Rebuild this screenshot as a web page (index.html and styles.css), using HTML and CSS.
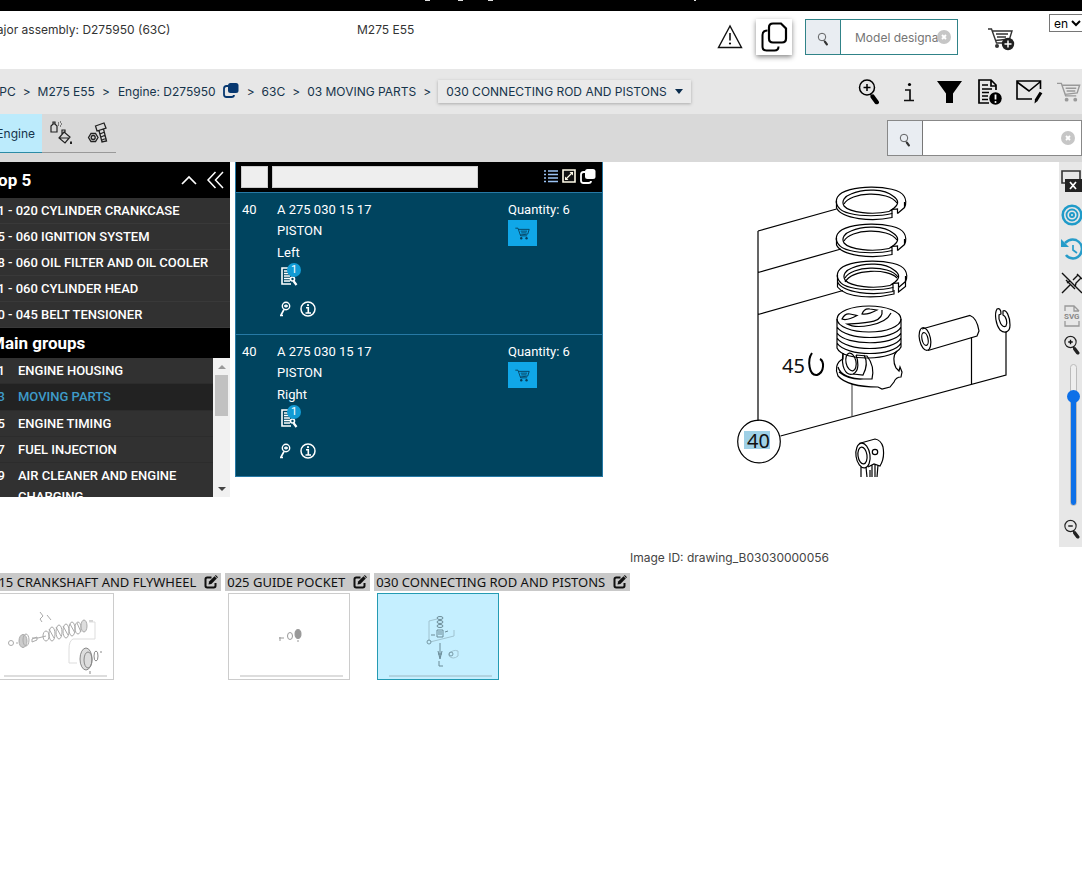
FILE: index.html
```html
<!DOCTYPE html>
<html lang="en">
<head>
<meta charset="utf-8">
<title>Parts catalogue</title>
<link rel="stylesheet" href="styles.css">
</head>
<body>
<svg class="defs" width="0" height="0" aria-hidden="true">
  <symbol id="zoomer" viewBox="0 0 24 26"><circle cx="10" cy="9" r="7.5" fill="none" stroke="currentColor" stroke-width="1.5"/><path d="M13.5 15.5l1.7 3" stroke="currentColor" stroke-width="1.5"/><path d="M15.7 18.2l4 5.5" stroke="currentColor" stroke-width="4.5" stroke-linecap="round"/></symbol>
  <symbol id="cart" viewBox="0 0 26 22"><path d="M0 2h4.500l4.500 13h11M5.500 4h18l-2.500 8-12.500 1.500M9 7h11M10 10h9" fill="none" stroke="currentColor" stroke-width="1.500"/><circle cx="10" cy="19" r="2" fill="currentColor"/><circle cx="19" cy="19" r="2" fill="currentColor"/></symbol>
  <symbol id="copy" viewBox="0 0 16 16"><path d="M5 4H3.500Q1 4 1 6.500v6Q1 15 3.500 15h5Q11 15 11 13" fill="none" stroke="currentColor" stroke-width="1.800"/><rect x="5" y="1" width="10.500" height="10" rx="2.500" fill="currentColor"/></symbol>
  <symbol id="edit" viewBox="0 0 14 14"><path d="M7.500 2.500H3.200Q1.500 2.500 1.500 4.200v6.600q0 1.700 1.700 1.700h6.600q1.700 0 1.700-1.700V8" fill="none" stroke="currentColor" stroke-width="2"/><path d="M4.500 9.500l.6-2.900L10.500 1.300l2.300 2.300-5.400 5.300z" fill="currentColor"/><path d="M11 .8l.8-.8L14 2.200l-.8.800z" fill="currentColor"/></symbol>
  <symbol id="doc" viewBox="0 0 17 19"><path d="M14 9V1H1v16h9" fill="none" stroke="currentColor" stroke-width="1.600"/><path d="M3 4h5M3 6.500h6M3 9h6M3 11.500h6M3 14h6" stroke="currentColor" stroke-width="1.500"/><circle cx="11.500" cy="12" r="2" fill="none" stroke="currentColor" stroke-width="1.600"/><path d="M12.500 14l3 4" stroke="currentColor" stroke-width="2.200"/></symbol>
  <symbol id="key" viewBox="0 0 14 16"><circle cx="8" cy="5" r="3.700" fill="none" stroke="currentColor" stroke-width="1.400"/><path d="M6 5h4M8 3.500v3M6 8.500L3 14M2 14.500h3" stroke="currentColor" stroke-width="1.600"/></symbol>
  <symbol id="info" viewBox="0 0 16 16"><circle cx="8" cy="8" r="7" fill="none" stroke="currentColor" stroke-width="1.500"/><path d="M6 6.700h2.300V12M5.500 12h5.500" fill="none" stroke="currentColor" stroke-width="1.600"/><circle cx="8" cy="4.200" r="1.100" fill="currentColor"/></symbol>
  <symbol id="clear" viewBox="0 0 14 14"><circle cx="7" cy="7" r="7" fill="#c6c6c6"/><path d="M5 5l4 4M9 5l-4 4" stroke="#fff" stroke-width="1.800"/></symbol>
</svg>

<div class="page">
  <div class="topbar">
    <svg class="topbar-marks" width="280" height="1" aria-hidden="true"><path d="M1 0h5M34 0h5M64 0h5M270 0h2" stroke="#ddd" stroke-width="2"/></svg>
  </div>

  <header class="header">
    <div class="assembly">Major assembly: D275950 (63C)</div>
    <div class="model">M275 E55</div>
    <div class="header-tools">
      <button class="plain" aria-label="Warnings"><svg width="26" height="26" viewBox="0 0 26 26"><path d="M13 2L1.500 23.500h23z" fill="none" stroke="#111" stroke-width="1.400"/><path d="M13 9v7.500" stroke="#111" stroke-width="1.600"/><circle cx="13" cy="19.500" r="1.100"/></svg></button>
      <button class="copy-button" aria-label="Copy"><svg width="28" height="30" viewBox="0 0 28 30"><path d="M7.500 8.500Q2.500 8.500 2.500 13v11.500Q2.500 28.500 6.500 28.500H14.500Q18.500 28.500 18.500 24.500" fill="none" stroke="#000" stroke-width="2"/><path d="M13 1.500h8l5 5v10Q26 20.500 22 20.500h-9Q9 20.500 9 16.500v-11Q9 1.500 13 1.500z" fill="none" stroke="#000" stroke-width="2.200"/></svg></button>
      <form class="search search-model">
        <button type="button" class="search-go" aria-label="Search model"><svg width="12" height="14"><use href="#zoomer"/></svg></button>
        <input type="text" aria-label="Model designation" placeholder="Model designation">
        <button type="button" class="clear" aria-label="Clear model"><svg width="14" height="14"><use href="#clear"/></svg></button>
      </form>
      <button class="plain cart-add" aria-label="Add to cart"><svg width="28" height="24" viewBox="0 0 28 24"><path d="M1 2h3.500l5 14h9M5 4h20l-2.500 8-14 1.500M9 7h12M10 10h9" fill="none" stroke="#333" stroke-width="1.400"/><circle cx="10" cy="19" r="2" fill="#333"/><circle cx="21" cy="17" r="6.200" fill="#222"/><path d="M21 13.500v7M17.500 17h7" stroke="#fff" stroke-width="1.500"/></svg></button>
      <select class="language" aria-label="Language"><option>en</option></select>
    </div>
  </header>

  <div class="crumb-bar">
    <nav class="crumbs" aria-label="Breadcrumb">
      <a href="#">EPC</a><span>&gt;</span>
      <a href="#">M275 E55</a><span>&gt;</span>
      <a href="#" class="crumb-engine">Engine: D275950 <svg width="16" height="16"><use href="#copy"/></svg></a><span>&gt;</span>
      <a href="#">63C</a><span>&gt;</span>
      <a href="#">03 MOVING PARTS</a><span>&gt;</span>
      <button class="crumb-menu">030 CONNECTING ROD AND PISTONS <svg width="8" height="5" viewBox="0 0 8 5"><path d="M0 0h8L4 5z" fill="#0b2d4e"/></svg></button>
    </nav>
    <div class="crumb-tools">
      <button aria-label="Zoom search"><svg width="24" height="27" viewBox="0 0 24 26"><use href="#zoomer"/><path d="M10 5.500v7M6.500 9h7" stroke="#000" stroke-width="1.500"/></svg></button>
      <button aria-label="Information"><svg width="14" height="22" viewBox="0 0 14 22"><path d="M3 9h5v10M2 19.500h10" fill="none" stroke="#111" stroke-width="1.700"/><circle cx="7.500" cy="3.500" r="1.600"/></svg></button>
      <button aria-label="Filter"><svg width="25" height="22" viewBox="0 0 25 22"><path d="M0 0h25l-9 12.500V22H9v-9.500z"/></svg></button>
      <button aria-label="Notes"><svg width="25" height="27" viewBox="0 0 25 27"><path d="M19 12V7l-5-5H2v23h10M14 2v6h5" fill="none" stroke="#000" stroke-width="1.700"/><path d="M5 7h6M5 11h10M5 14.500h7M5 18h6M5 21.500h6" stroke="#000" stroke-width="1.500"/><circle cx="18.500" cy="20.500" r="6.200"/><path d="M18.500 16.500v5" stroke="#fff" stroke-width="1.800"/><circle cx="18.500" cy="24" r="1" fill="#fff"/></svg></button>
      <button aria-label="Write message"><svg width="28" height="25" viewBox="0 0 28 25"><path d="M25.500 10V2H2v18h15M2 3l12 9L25 3" fill="none" stroke="#000" stroke-width="1.600"/><path d="M26 13.500l-5 8" stroke="#000" stroke-width="3.200"/><path d="M20 20.500l-.5 4 3-2.500z"/></svg></button>
      <button class="muted" aria-label="Cart"><svg width="25" height="22"><use href="#cart"/></svg></button>
    </div>
  </div>

  <div class="tab-bar">
    <nav class="tabs" aria-label="Catalogue">
      <button class="tab tab-active">Engine</button>
      <button class="tab" aria-label="Paint and fluids"><svg width="24" height="24" viewBox="0 0 24 24" fill="none" stroke="#222" stroke-width="1.200"><path d="M2 11V5l2-2h2l2 2v6zM4 3V1h2v2M9 2h1M11 1h1M9 4h1M12 3h1M11 5h1"/><path d="M15 11l6 5-5 6-6-5zM13 13.500V9h3v3M11 17h9"/><path d="M22 20.500v2.500" stroke-width="2"/></svg></button>
      <button class="tab" aria-label="Standard parts"><svg width="22" height="22" viewBox="0 0 22 22" fill="none" stroke="#222" stroke-width="1.300"><path d="M8.500 4l8.500-3 2 5-9 3zM12 8.500l3 11.500 4.500-1-3-12M13 12l4.500-2M14 15l4.500-2M15 18l4.500-2"/><path d="M1.500 15.500L4 11.500h4.500l2.500 4-2.500 4H4z"/><circle cx="6.200" cy="15.500" r="2"/></svg></button>
    </nav>
    <form class="search search-parts">
      <button type="button" class="search-go" aria-label="Search parts"><svg width="12" height="14"><use href="#zoomer"/></svg></button>
      <input type="text" aria-label="Part search">
      <button type="button" class="clear" aria-label="Clear search"><svg width="14" height="14"><use href="#clear"/></svg></button>
    </form>
  </div>

  <main class="workspace">
    <aside class="groups">
      <div class="groups-head">
        <h2>Top 5</h2>
        <button aria-label="Collapse section"><svg width="16" height="10" viewBox="0 0 16 10"><path d="M1 9l7-7 7 7" fill="none" stroke="#fff" stroke-width="1.700"/></svg></button>
        <button aria-label="Hide panel"><svg width="18" height="18" viewBox="0 0 18 18"><path d="M9.500 1L2 9l7.500 8M17 1L9.500 9l7.500 8" fill="none" stroke="#fff" stroke-width="1.500"/></svg></button>
      </div>
      <ul class="top-list">
        <li><a href="#">01 - 020 CYLINDER CRANKCASE</a></li>
        <li><a href="#">15 - 060 IGNITION SYSTEM</a></li>
        <li><a href="#">18 - 060 OIL FILTER AND OIL COOLER</a></li>
        <li><a href="#">01 - 060 CYLINDER HEAD</a></li>
        <li><a href="#">20 - 045 BELT TENSIONER</a></li>
      </ul>
      <h2 class="groups-title">Main groups</h2>
      <div class="group-scroll">
        <ul class="group-list">
          <li><a href="#"><span>01</span>ENGINE HOUSING</a></li>
          <li class="current"><a href="#"><span>03</span>MOVING PARTS</a></li>
          <li><a href="#"><span>05</span>ENGINE TIMING</a></li>
          <li><a href="#"><span>07</span>FUEL INJECTION</a></li>
          <li><a href="#"><span>09</span>AIR CLEANER AND ENGINE CHARGING</a></li>
        </ul>
        <div class="scrollbar" aria-hidden="true">
          <svg width="8" height="4" viewBox="0 0 8 4"><path d="M0 4l4-4 4 4z" fill="#999"/></svg>
          <div class="scroll-thumb"></div>
          <svg class="scroll-down" width="8" height="4" viewBox="0 0 8 4"><path d="M0 0h8L4 4z" fill="#444"/></svg>
        </div>
      </div>
    </aside>

    <section class="parts" aria-label="Parts">
      <div class="parts-head">
        <input class="filter-number" type="text" aria-label="Filter by item">
        <input class="filter-name" type="text" aria-label="Filter by name">
        <button aria-label="List view"><svg width="14" height="14" viewBox="0 0 14 14"><path d="M0 2h2M4 2h10M0 5.500h2M4 5.500h10M0 9h2M4 9h10M0 12.500h2M4 12.500h10" stroke="#9cc4f5" stroke-width="1.600"/></svg></button>
        <button aria-label="Expand"><svg width="14" height="14" viewBox="0 0 14 14"><path d="M1 1h12v12H1z" fill="#111" stroke="#fffbe8" stroke-width="1.600"/><path d="M3.500 10.500l7-7" stroke="#fffbe8" stroke-width="1.300"/><path d="M7.500 3H11v3.500zM3 7.500V11h3.500z" fill="#fffbe8"/></svg></button>
        <button aria-label="Copy list"><svg width="16" height="16"><use href="#copy"/></svg></button>
      </div>
      <article class="part">
        <div>40</div>
        <div>
          <div>A 275 030 15 17</div><div>PISTON</div><div class="side">Left</div>
          <button class="note" aria-label="1 note"><svg width="17" height="19"><use href="#doc"/></svg><span class="badge">1</span></button>
          <div class="part-icons"><svg width="14" height="16"><use href="#key"/></svg><svg width="16" height="16"><use href="#info"/></svg></div>
        </div>
        <div><div>Quantity: 6</div><button class="buy" aria-label="Add left piston to cart"><svg width="16" height="13"><use href="#cart"/></svg></button></div>
      </article>
      <article class="part">
        <div>40</div>
        <div>
          <div>A 275 030 15 17</div><div>PISTON</div><div class="side">Right</div>
          <button class="note" aria-label="1 note"><svg width="17" height="19"><use href="#doc"/></svg><span class="badge">1</span></button>
          <div class="part-icons"><svg width="14" height="16"><use href="#key"/></svg><svg width="16" height="16"><use href="#info"/></svg></div>
        </div>
        <div><div>Quantity: 6</div><button class="buy" aria-label="Add right piston to cart"><svg width="16" height="13"><use href="#cart"/></svg></button></div>
      </article>
    </section>

    <section class="drawing" aria-label="Drawing">
      <svg class="drawing-art" viewBox="603 162 456 315" fill="none" stroke="#000" stroke-width="1.200">
        <g id="ring">
          <path d="M897.500 213.500L904.500 207.500C906.500 204 906 199 904 196C897 184 845 184 837.500 197C834 203 838 211 850 213.500C862 216.500 880 216.500 892 213.500V209.500L889 211.500"/>
          <path d="M889 211.500C873 215 850 213 844 206C841 201 845 196 851 194C864 188 885 189 893 196C899 200 899 204 894 208L892 209.500L897.500 209V213.500"/>
          <path d="M844 204C850 192 888 190 897 203M836.500 201V208C842 219 872 222 892 217.500V213.500M904.500 207.500V202"/>
        </g>
        <use href="#ring" transform="translate(0 37)"/>
        <use href="#ring" transform="translate(1 74)"/>
        <path d="M837.500 282V287C846 298 874 299 894 294V290M898.500 287.500v4.500l7-5.500v-6M845 282C853 269 888 268 897 278"/>
        <path d="M836.500 209L758 231M841 249L758 272.500M843 290.500L758 314.500M758 231V421M780.500 436L1006 375V332M971.500 384V337"/>
        <path d="M852 416.500V384" stroke="#555"/>
        <ellipse cx="869" cy="319" rx="32" ry="13"/>
        <path d="M837 319V348C843 362 894 361 901 347V319M837 327C846 341 894 341 901 327M837 333C846 346 894 346 901 333M837 338C846 352 894 352 901 338M837 343C846 357 894 357 901 343"/>
        <path d="M842 319Q845 313 850 314L857 315.500Q847 321 842 319zM862 314Q864 308 870 309L877 310Q868 315 862 314zM882 310C884 323 867 323 847 324C856 329 885 326 891 313"/>
        <path d="M843 353V359C836 362 835 370 838 376C845 384 862 387 878 387L882 389L890 387L894 382Q896 377 901 377L902 372L900 367L899 371L896 368C893 362 893 355 897 351"/>
        <ellipse cx="851" cy="362" rx="5" ry="9" transform="rotate(-12 851 362)"/>
        <path d="M843 353C841 366 845 376 853 374C860 371 858 360 856 355M856 355L867 356Q875 366 872 379L864 379M864 355Q869 364 863 375L853 374M838 367C840 375 851 379 864 379M839 372Q849 380 863 379"/>
        <ellipse cx="925" cy="339" rx="5.500" ry="11.500" transform="rotate(-12 925 339)"/>
        <ellipse cx="925" cy="339" rx="3" ry="6.500" transform="rotate(-12 925 339)"/>
        <path d="M922 329L970 315.500Q977 318 979 331L977 336L928 350.500"/>
        <path d="M1001 314C1001 309 999 308 997 309C994 314 996 325 1000 330C1005 334 1010 332 1010 325C1010 316 1006 309 1003 311L1003 315C1006 316 1008 323 1006 326C1002 329 998 320 999 315z"/>
        <path d="M812 353C807 360 809 376 817 375C825 372 824 361 820 359" stroke-width="2"/>
        <ellipse cx="863" cy="455.500" rx="7" ry="12.500" transform="rotate(-8 863 455.500)"/>
        <ellipse cx="862.500" cy="455.500" rx="4.500" ry="8.500" transform="rotate(-8 862.500 455.500)"/>
        <circle cx="875" cy="452" r="2.700"/>
        <path d="M859 443.500L875 439Q881 440 883 447Q885 458 880 466L874 464L868 467M861 467V477M866 467L867 477M872 465V477M875 464V477M878 465L877 477M870 470V477"/>
        <circle cx="759" cy="441.500" r="21.300"/>
        <rect x="744" y="431" width="26" height="18" fill="#9fd0e6" stroke="none"/>
        <text class="callout" x="747" y="448">40</text>
        <text class="callout" x="782" y="373">45</text>
      </svg>
      <p class="image-id">Image ID: drawing_B03030000056</p>
    </section>

    <aside class="rail" aria-label="Drawing tools">
      <button class="rail-tall" aria-label="Close window"><svg width="21" height="24" viewBox="0 0 21 24"><path d="M1 3h18v12H1z" fill="none" stroke="#333" stroke-width="1.600"/><path d="M4 11h17v13H4z" fill="#222"/><path d="M9 14l6 7M15 14l-6 7" stroke="#fff" stroke-width="1.700"/></svg></button>
      <button aria-label="Target"><svg width="22" height="22" viewBox="0 0 22 22" fill="none" stroke="#1f9bc9"><circle cx="11" cy="11" r="9.300" stroke-width="2.500"/><circle cx="11" cy="11" r="5.500" stroke-width="1.800"/><circle cx="11" cy="11" r="2" stroke-width="2"/></svg></button>
      <button aria-label="History"><svg width="22" height="24" viewBox="0 0 22 24" fill="none" stroke="#279cc9" stroke-width="2.500"><path d="M4 6Q9 1 15 3Q21 6 21 12Q20 21 12 21.500Q7 21 5 18"/><path d="M0 2v8h8z" fill="#279cc9" stroke="none"/><path d="M12 8v5l4 3" stroke-width="1.700"/></svg></button>
      <button aria-label="Unpin"><svg width="22" height="22" viewBox="0 0 22 22" fill="none" stroke="#111" stroke-width="1.400"><path d="M1 1l20 20M1 21l8-8M5 8l9 9M6 11l3-2M12 8l5-5M14 15l1-4 5-5M16 2l5 5"/></svg></button>
      <button class="rail-short" aria-label="Export SVG"><svg width="18" height="22" viewBox="0 0 18 22"><path d="M2 6V1h9l5 5M11 1v5h5M2 16v5h14v-5" fill="none" stroke="#999" stroke-width="1.300"/><text class="svg-label" x="1" y="14">SVG</text></svg></button>
      <button class="rail-zoom" aria-label="Zoom in"><svg width="18" height="20" viewBox="0 0 24 26"><use href="#zoomer"/><path d="M10 6v6M7 9h6" stroke="#111" stroke-width="1.800"/></svg></button>
      <input class="zoom-range" type="range" min="0" max="100" value="80" aria-label="Zoom level">
      <button class="rail-out" aria-label="Zoom out"><svg width="18" height="20" viewBox="0 0 24 26"><use href="#zoomer"/><path d="M7 9h6" stroke="#111" stroke-width="1.800"/></svg></button>
    </aside>
  </main>

  <div class="thumbs">
    <figure>
      <figcaption>015 CRANKSHAFT AND FLYWHEEL <svg width="14" height="14"><use href="#edit"/></svg></figcaption>
      <a href="#" class="thumb" aria-label="Crankshaft and flywheel"><svg width="120" height="85" viewBox="0 0 120 85" fill="none" stroke="#aaa">
        <path d="M11 82h103" stroke="#bbb"/><g stroke="#aaa"><ellipse cx="30" cy="47" rx="4" ry="6.500" fill="#ccc"/><ellipse cx="33" cy="46" rx="3" ry="6"/><circle cx="18" cy="49" r="2.500"/><path d="M23 49h2M39 45l5-2v3l-5 2zM45 44l8-2"/><ellipse cx="53" cy="42" rx="3" ry="5"/><ellipse cx="59" cy="40" rx="3" ry="7"/><ellipse cx="66" cy="38" rx="3" ry="7"/><ellipse cx="73" cy="37" rx="3" ry="7"/><ellipse cx="79" cy="35" rx="3" ry="7"/><ellipse cx="85" cy="34" rx="3" ry="6"/><ellipse cx="91" cy="32" rx="3" ry="6" fill="#ddd"/><path d="M56 35l5 9M63 33l5 9M70 32l5 9M77 30l5 9M84 29l4 9M39 44h6M47 18l3 4-3 3 2 3M54 21l4 5M96 27h4"/></g>
        <path d="M96 28h6v17H80Q76 47 76 55v14h8" stroke="#ddd"/><g stroke="#888"><ellipse cx="93" cy="65" rx="6" ry="11" fill="#ddd"/><ellipse cx="95" cy="66" rx="4" ry="8"/><ellipse cx="103" cy="62" rx="2" ry="5"/><path d="M107 58h2M97 77v3"/></g></svg></a>
    </figure>
    <figure>
      <figcaption>025 GUIDE POCKET <svg width="14" height="14"><use href="#edit"/></svg></figcaption>
      <a href="#" class="thumb" aria-label="Guide pocket"><svg width="120" height="85" viewBox="0 0 120 85" fill="none" stroke="#999"><path d="M11 82h103" stroke="#bbb"/><ellipse cx="69" cy="40" rx="3" ry="4.500" fill="#999"/><ellipse cx="61" cy="42" rx="2.500" ry="3.500"/><path d="M50 44h5M51 43v4M69 46v2"/></svg></a>
    </figure>
    <figure>
      <figcaption>030 CONNECTING ROD AND PISTONS <svg width="14" height="14"><use href="#edit"/></svg></figcaption>
      <a href="#" class="thumb thumb-active" aria-label="Connecting rod and pistons"><svg width="120" height="85" viewBox="0 0 120 85" fill="none" stroke="#7799a5"><path d="M11 82h103" stroke="#9cb6c0"/><g stroke="#6b8b97"><ellipse cx="62" cy="24" rx="3" ry="1.500"/><ellipse cx="62" cy="28" rx="3" ry="1.500"/><ellipse cx="62" cy="32" rx="3" ry="1.500"/><path d="M59 36h6v7h-6zM60 38h4M60 40h4M62 49v14M60 57l2 8 2-8M60 60h4M61 67v5M61 72h4M53 41h4M67 38l3-1"/></g><path d="M59 25l-8 2v20M52 48l24-6v-6M71 60q4-5 9-3v5q-5 4-9 0z" stroke="#a0c3d0"/><circle cx="51" cy="48" r="2"/><circle cx="73" cy="60" r="2"/></svg></a>
    </figure>
  </div>
</div>
</body>
</html>
```
FILE: styles.css
```css
* { box-sizing: border-box; }
body { margin: 0; overflow-x: hidden; background: #fff; color: #333; font: 13px/20px Roboto, "Noto Sans", sans-serif; }
button, input, select { font: inherit; color: inherit; }
button { display: inline-flex; align-items: center; justify-content: center; padding: 0; border: 0; background: none; cursor: pointer; }
a { color: inherit; text-decoration: none; }
svg { display: block; flex: none; }
ul { margin: 0; padding: 0; list-style: none; }
.defs { position: absolute; }

/* The catalogue page is scrolled slightly to the right */
.page { margin-left: -20px; }

.topbar { height: 11px; padding-left: 444px; background: #000; }

.header { display: flex; height: 58px; padding-top: 8px; font-family: Inter, sans-serif; font-size: 12px; }
.assembly { width: 377px; padding: 1px 0 0 6px; }
.model { padding-top: 1px; }
.header-tools { display: flex; align-items: flex-start; margin-left: auto; }
.header-tools .plain { height: 36px; }
.copy-button { width: 36px; height: 36px; margin: 0 13px; background: #fff; box-shadow: 0 2px 5px #888; }
.search { display: flex; align-items: center; height: 36px; border: 1px solid #308388; background: #fff; position: relative; }
.search-go { width: 35px; align-self: stretch; padding-top: 4px; border-right: 1px solid #308388; background: #e9edf2; }
.search input { flex: 1; min-width: 0; height: 34px; border: 0; outline: 0; background: transparent; }
.search-model { width: 153px; }
.search-model input { padding: 0 14px; }
.search input::placeholder { color: #757575; }
.clear { position: absolute; right: 6px; top: 10px; }
.cart-add { margin: 2px 34px 0 29px; }
.language { width: 36px; height: 18px; margin: -5px -3px 0 0; padding: 0; border: 1px solid #767676; background: #fff; color: #000; font-size: 12px; line-height: normal; }

.crumb-bar { display: flex; align-items: center; height: 45px; padding-left: 12px; background: #e7e7e7; color: #16344b; }
.crumbs { display: flex; align-items: center; gap: 7px; font-family: Inter, sans-serif; font-size: 12px; white-space: nowrap; }
.crumb-engine { display: flex; gap: 7px; margin: 0 1px; color: #16344b; }
.crumb-engine svg { color: #073870; }
.crumb-menu { gap: 8px; height: 23px; padding: 0 8px; background: #eaeaea; box-shadow: 0 1px 3px #aaa; }
.crumb-tools { display: flex; margin: 0 -7px 0 auto; color: #000; }
.crumb-tools button { width: 40px; height: 40px; }
.crumb-tools .muted { color: #999; }

.tab-bar { display: flex; align-items: flex-start; justify-content: space-between; height: 48px; background: #d9d9d9; }
.tabs { display: flex; height: 39px; border-bottom: 1px solid #999; }
.tab { width: 37px; color: #16344b; font-family: Inter, sans-serif; font-size: 12px; }
.tab-active { width: 62px; height: 39px; padding: 1px 7px 0 0; justify-content: flex-end; border-bottom: 1px solid #2c8ba5; background: #bcebfc; }
.search-parts { width: 195px; margin-top: 6px; border-color: #888; }
.search-parts .search-go { border-color: #777; }

.workspace { display: flex; align-items: flex-start; }
.groups { width: 250px; background: #313131; color: #fff; font-weight: 500; }
.groups h2 { margin: 0; font-size: 17px; font-weight: 700; }
.groups-head { display: flex; align-items: center; gap: 9px; height: 36px; padding: 0 6px 0 9px; background: #000; }
.groups-head h2 { margin-right: auto; }
.top-list li { height: 26px; padding-left: 10px; border-bottom: 1px solid #393939; line-height: 25px; white-space: nowrap; }
.groups .groups-title { padding: 0 10px; background: #000; line-height: 30px; }
.group-scroll { display: flex; height: 139px; overflow: hidden; }
.group-list { flex: 1; }
.group-list li { padding: 2px 7px 2px 10px; border-bottom: 1px solid #2c2c2c; line-height: 21px; }
.group-list .current { padding-bottom: 3px; background: #222; color: #3e9bc9; }
.group-list a { display: grid; grid-template-columns: 28px 1fr; }
.scrollbar { display: flex; flex-direction: column; align-items: center; width: 17px; padding: 7px 0 6px; background: #f1f1f1; }
.scroll-thumb { width: 13px; height: 41px; margin-top: 6px; background: #c1c1c1; }
.scroll-down { margin-top: auto; }

.parts { width: 368px; margin-left: 5px; border: solid #2679a5; border-width: 0 1px 1px; background: #00445f; color: #fff; }
.parts-head { display: flex; align-items: center; gap: 4px; height: 30px; padding: 0 6px 3px 5px; background: #000; }
.parts-head input { height: 22px; margin-top: 3px; padding: 0 4px; border: 1px solid #ccc; background: #eee; color: #222; }
.filter-number { width: 27px; }
.filter-name { width: 206px; margin-right: auto; }
.part { display: grid; grid-template-columns: 35px 1fr 94px; min-height: 142px; padding: 6px 0 0 6px; border-top: 1px solid #2679a5; line-height: 21px; }
.side { padding-top: 1px; }
.note { position: relative; margin: 4px 0 0 4px; color: #fff; }
.badge { position: absolute; left: 6px; top: -4px; width: 14px; height: 14px; border-radius: 7px; background: #119bd4; font-size: 11px; line-height: 14px; }
.part-icons { display: flex; gap: 8px; margin: 9px 0 0 1px; }
.buy { width: 29px; height: 26px; background: #10a7e8; color: #063d59; }

.drawing { flex: 1; min-width: 0; }
.drawing-art { width: 100%; height: auto; }
.callout { fill: #111; stroke: none; font: 20px "Noto Sans", sans-serif; }
.image-id { margin: 70px 0 0 27px; color: #444; font-family: Inter, sans-serif; font-size: 12px; line-height: 22px; }

.rail { display: flex; flex-direction: column; align-items: center; width: 23px; background: #e7e7e7; color: #222; overflow: hidden; }
.rail button { width: 23px; height: 34px; padding-left: 2px; }
.rail .rail-tall { height: 36px; }
.rail .rail-short { height: 32px; }
.rail .rail-zoom { height: 25px; }
.rail .rail-out { height: 41px; padding-top: 5px; }
.svg-label { fill: #888; font: bold 8px Roboto, sans-serif; }
.zoom-range { appearance: none; writing-mode: vertical-lr; direction: rtl; width: 13px; height: 142px; margin: 7px 0 0 5px; background: none; }
.zoom-range::-webkit-slider-runnable-track { width: 7px; border: 1px solid #bbb; border-radius: 4px; background: linear-gradient(to bottom, #eee 21%, #0d70e8 21%); }
.zoom-range::-webkit-slider-thumb { appearance: none; width: 13px; height: 13px; margin-left: -4px; border-radius: 50%; background: #0d70e8; }

.thumbs { display: flex; gap: 4px; padding: 4px 0 0 9px; }
.thumbs figure { margin: 0; }
.thumbs figcaption { display: flex; align-items: center; gap: 8px; height: 18px; padding: 0 3px 0 2px; background: #c9c9c9; color: #111; font-family: "Noto Sans", sans-serif; font-size: 13px; line-height: 18px; white-space: nowrap; }
.thumb { display: block; width: 122px; margin: 2px 0 0 3px; border: 1px solid #ccc; }
.thumb-active { border-color: #249bb3; background: #c5efff; }
```
